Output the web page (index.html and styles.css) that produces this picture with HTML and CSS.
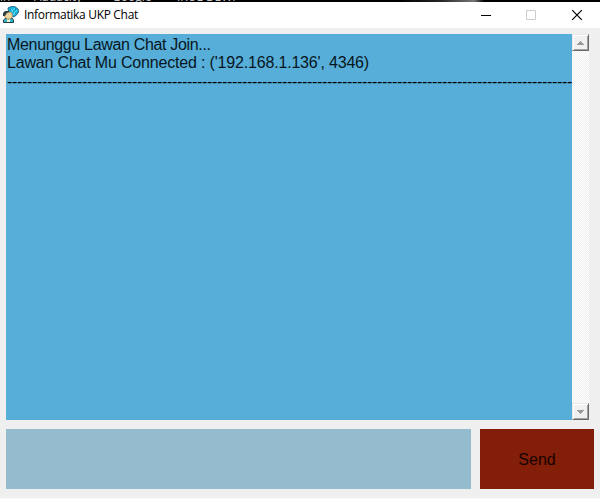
FILE: index.html
```html
<!DOCTYPE html>
<html lang="id">
<head>
<meta charset="utf-8">
<title>Informatika UKP Chat</title>
<link rel="stylesheet" href="styles.css">
</head>
<body>
<div class="desktop"><span class="lbl-a">in</span><span class="lbl-b">Audacity</span><span class="lbl-c">Google</span><span class="lbl-d">IRUL DEWI</span></div>
<header class="titlebar">
  <svg class="app-icon" width="18" height="18" viewBox="0 0 18 18">
    <path d="M6 2L9 .7H13L16 3L16.500 6L14 9.500L11 11L7 8Z" fill="#13b7e6" stroke="#17668c"/>
    <path d="M8 2L14 8M9 7L13 2M11 9L15 4" stroke="#72e5f2"/>
    <path d="M8 3h1M11 5h1M13 3h1M13 7h1" stroke="#075584"/>
    <path d="M1.500 16.500V14L4 12H10L11.500 14V16.500Z" fill="#35b4c6" stroke="#203b43"/>
    <path d="M2 10L3 7L6 5L10 7L10.500 11L8 13H5Z" fill="#f1d49b" stroke="#9b7942" stroke-width=".7"/>
    <path d="M1 10V7L3 5H7L8 6L5 7L3 10Z" fill="#314247"/>
    <path d="M5 13L6 14L8 13V16H5Z" fill="#f7efcc"/>
  </svg>
  <h1>Informatika UKP Chat</h1>
  <div class="controls">
    <svg width="46" height="26" viewBox="0 0 46 26"><path d="M19 13.500h10" stroke="#000"/></svg>
    <svg width="46" height="26" viewBox="0 0 46 26"><path d="M18.500 8.500h9v9h-9z" fill="none" stroke="#ccc"/></svg>
    <svg width="46" height="26" viewBox="0 0 46 26"><path d="M18.200 8.200l9.600 9.600M27.800 8.200l-9.600 9.600" stroke="#000" stroke-width="1.200"/></svg>
  </div>
</header>
<main>
  <section class="log">
    <div class="messages">
      <p class="status">Menunggu Lawan Chat Join...</p>
      <p class="peer">Lawan Chat Mu Connected : ('192.168.1.136', 4346)</p>
      <p class="divider">-----------------------------------------------------------------------------------------------------------------</p>
    </div>
    <div class="scrollbar">
      <div class="arrow"><svg width="7" height="4" viewBox="0 0 7 4" shape-rendering="crispEdges"><path d="M3 0h1v1h1v1h1v1h1v1H0V3h1V2h1V1h1z" fill="#999"/></svg></div>
      <div class="arrow"><svg width="7" height="4" viewBox="0 0 7 4" shape-rendering="crispEdges"><path d="M0 0h7v1H6v1H5v1H4v1H3V3H2V2H1V1H0z" fill="#999"/></svg></div>
    </div>
  </section>
  <section class="composer">
    <div class="entry"></div>
    <div class="send">Send</div>
  </section>
</main>
</body>
</html>
```

FILE: styles.css
```css
* { box-sizing: border-box; }
body {
  margin: 0;
  width: 600px;
  height: 499px;
  overflow: hidden;
  display: flex;
  flex-direction: column;
  background: #fafafa;
  font-family: "Liberation Sans", Arial, sans-serif;
}
.desktop {
  height: 2px;
  flex: none;
  display: flex;
  align-items: flex-end;
  overflow: hidden;
  background: linear-gradient(90deg, #000 0 400px, #242424 440px, #777 474px, #000 484px);
  color: #c8c8c8;
  font: 12px/12px "Open Sans", sans-serif;
}
.desktop span { flex: none; margin-bottom: -1px; }
.lbl-a { width: 34px; }
.lbl-b { width: 78px; }
.lbl-c { width: 65px; }
.titlebar {
  height: 26px;
  flex: none;
  display: flex;
  align-items: center;
  background: #fff;
  padding-left: 2px;
}
.app-icon { width: 18px; height: 18px; }
h1 {
  margin: 0 0 0 4px;
  font: 12px/16px "Open Sans", sans-serif;
  letter-spacing: -0.32px;
  color: #000;
  white-space: nowrap;
}
.controls { margin-left: auto; display: flex; }
main {
  height: 470px;
  flex: none;
  padding: 6px 6px 9px;
  display: flex;
  flex-direction: column;
  gap: 9px;
  background: #efefef;
}
.log { display: flex; width: 583px; height: 386px; }
.messages {
  width: 566px;
  padding: 2px 0 0 1px;
  overflow: hidden;
  background: #57aed9;
  color: #071620;
}
.messages p {
  margin: 0;
  font-size: 16px;
  line-height: 18px;
  white-space: nowrap;
}
.messages .status { letter-spacing: -0.33px; }
.messages .peer { letter-spacing: -0.18px; }
.messages .divider { letter-spacing: -0.328px; padding-top: 1px; color: #000; }
.scrollbar {
  width: 17px;
  display: flex;
  flex-direction: column;
  justify-content: space-between;
  background: repeating-conic-gradient(#efefef 0 25%, #fff 0 50%) 0 0 / 2px 2px;
}
.arrow {
  width: 17px;
  height: 17px;
  display: flex;
  align-items: center;
  justify-content: center;
  background: #f0f0f0;
  border: 1px solid;
  border-color: #e8e8e8 #696969 #696969 #e8e8e8;
  box-shadow: inset 1px 1px #fff, inset -1px -1px #a0a0a0;
}
.composer { display: flex; gap: 9px; height: 60px; }
.entry { width: 465px; background: #94bbce; }
.send {
  width: 114px;
  padding-top: 2px;
  display: flex;
  align-items: center;
  justify-content: center;
  background: #831e09;
  color: #180300;
  font-size: 16px;
}
```
